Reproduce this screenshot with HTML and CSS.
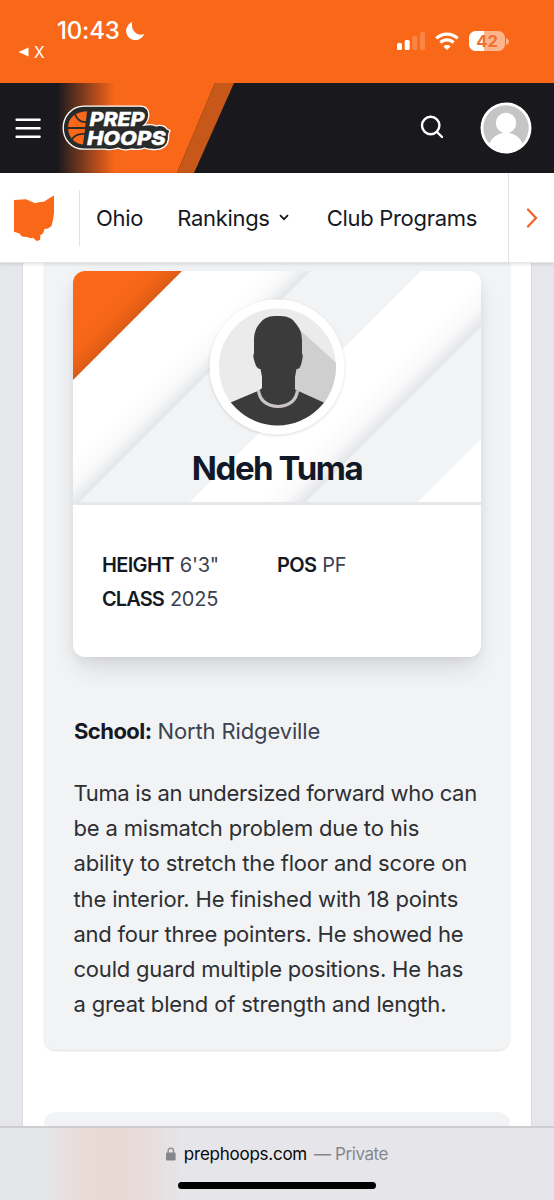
FILE: index.html
```
<!DOCTYPE html>
<html lang="en">
<head>
<meta charset="utf-8">
<title>Prep Hoops</title>
<link rel="stylesheet" href="styles.css">
</head>
<body>
<div class="screen">
  <header class="status">
    <div class="status-left">
      <div class="clock"><span>10:43</span>
        <svg width="20" height="20" viewBox="0 0 20 20"><path d="M7.2 1.1A9.3 9.3 0 1 0 19.2 13C13 15.500 5.500 10.500 7.200 1.100Z" fill="#fff"/></svg>
      </div>
      <div class="back"><svg width="11" height="10" viewBox="0 0 11 10"><path d="M0.5 5 10.5 .4V9.6Z" fill="#fff"/></svg><span>X</span></div>
    </div>
    <div class="status-right">
      <svg class="signal" width="28" height="18" viewBox="0 0 28 18" fill="#fff"><rect y="11" width="5" height="7" rx="1.5"/><rect x="7.7" y="8" width="5" height="10" rx="1.5"/><rect x="15.3" y="4" width="5" height="14" rx="1.5" opacity=".2"/><rect x="23" width="5" height="18" rx="1.5" opacity=".2"/></svg>
      <svg class="wifi" width="24" height="18" viewBox="0 0 24 18" fill="none" stroke="#fff" stroke-width="3.2"><path d="M1.3 6.4a15.4 15.4 0 0 1 21.4 0M5.4 10.6a9.5 9.5 0 0 1 13.2 0"/><path d="M12 17.9 8.4 14.4a5.2 5.2 0 0 1 7.2 0Z" fill="#fff" stroke="none"/></svg>
      <div class="battery"><span class="level">42</span><svg width="3" height="7" viewBox="0 0 3 7"><path d="M0 0q3 1.2 3 3.5T0 7Z" fill="#fff" opacity=".5"/></svg></div>
    </div>
  </header>

  <nav class="topbar">
    <svg class="flash" width="234" height="90" viewBox="0 0 234 90">
      <defs><linearGradient id="fade" gradientUnits="userSpaceOnUse" x1="57" y1="0" x2="115" y2="0"><stop offset="0" stop-color="#18181d"/><stop offset=".3" stop-color="#5b301f"/><stop offset=".7" stop-color="#b84e1b"/><stop offset="1" stop-color="#f96818"/></linearGradient></defs>
      <path d="M57 0H215L177 90H57Z" fill="url(#fade)"/><path d="M215 0h19l-40 90h-17Z" fill="#c85819"/>
    </svg>
    <svg class="menu" width="26" height="21" viewBox="0 0 26 21" stroke="#fff" stroke-width="2.4" stroke-linecap="round"><path d="M1.6 1.7h23M1.6 10.2h23M1.6 18.8h23"/></svg>
    <svg class="logo" width="110" height="46" viewBox="0 0 110 46">
      <path d="M22 1.2H78C84 1.2 87.5 5 86.7 11C86.2 15 84.5 18 82 20.2C88 19 91 19.5 94 21C98 19.5 103 20.5 105 24L108 25.5L106.5 30L106.5 34C105.5 42 99 45 91 44.5C87 44.5 84.5 44 82.5 43C80 44.5 73 44.8 69 44C64 45.5 60 45 56 43.2C50 45.5 46 44.5 43 44.2H22C9 44.2 1.2 34 1.2 23S9 1.2 22 1.2Z" fill="#292b2b" stroke="#fff" stroke-width="1.3"/>
      <path d="M25 6.2C13 6.7 6.3 13 6.1 22H23.2ZM6.1 24C7 33 12.5 38.5 21 39.5L23 24Z" fill="#f96818"/>
      <path d="M13 9C15 15.5 19 17.2 24 17.1M9.5 35.5C12 30 17 28.5 23 29" fill="none" stroke="#292b2b" stroke-width="1.7"/>
      <g fill="#fff" stroke="#fff" stroke-width=".4" class="logo-text"><text x="27.500" y="20.500" font-size="18.800" textLength="55" lengthAdjust="spacingAndGlyphs">PREP</text><text x="25" y="39.5" font-size="19" textLength="78.500" lengthAdjust="spacingAndGlyphs">HOOPS</text></g>
    </svg>
    <svg class="search" width="24" height="24" viewBox="0 0 24 24" fill="none" stroke="#fff" stroke-width="2.4" stroke-linecap="round"><circle cx="10.7" cy="10.5" r="8.7"/><path d="m17 17 5 5"/></svg>
    <svg class="user" width="52" height="52" viewBox="0 0 52 52"><circle cx="26" cy="26" r="25.5" fill="#fff"/><circle cx="26" cy="26" r="22.7" fill="#c5c5c5"/><circle cx="26" cy="21" r="10.2" fill="#fff"/><path d="M22.5 28h7v3c7 1.5 12 6 13.5 12.5Q37 50.7 26 50.8 15 50.7 9 43.5C10.500 37 15.500 32.500 22.500 31Z" fill="#fff"/></svg>
  </nav>

  <nav class="subnav">
    <div class="state"><svg width="42" height="47" viewBox="0 0 42 47"><path d="M1 5 9 4.500 13 4.200 17 6 22 8.200 27 7 31 6.800 35 4 41 .4V18L40 25 38.500 31 35 33.500 31.500 34 30 38.500 27.500 40 27 45 23.500 46 20 42.700 17.500 43.200 14 42 9 41.500 6.500 38.500 1 36.800Z" fill="#f96818"/></svg></div>
    <div class="links">
      <a class="ohio">Ohio</a>
      <a class="rankings"><span>Rankings</span><svg width="10" height="7" viewBox="0 0 10 7" fill="none" stroke="#151923" stroke-width="1.8"><path d="M1 1.100 5 5.200 9 1.100"/></svg></a>
      <a class="clubs">Club Programs</a>
    </div>
    <div class="next"><svg width="12" height="20" viewBox="0 0 12 20" fill="none" stroke="#f0642a" stroke-width="2.300" stroke-linecap="round"><path d="m2 1.500 8 8.500-8 8.500"/></svg></div>
  </nav>

  <main class="page">
    <div class="sheet">
      <section class="panel">
        <article class="player">
          <div class="hero">
            <svg class="stripes" width="408" height="231" viewBox="0 0 408 231">
              <defs>
                <linearGradient id="warm" gradientUnits="userSpaceOnUse" x1="34" y1="34" x2="55" y2="55"><stop offset="0" stop-color="#f96818"/><stop offset=".5" stop-color="#f16417"/><stop offset="1" stop-color="#dc5a15"/></linearGradient>
                <linearGradient id="s1" gradientUnits="userSpaceOnUse" x1="95" y1="95" x2="119" y2="119"><stop offset="0" stop-color="#fff"/><stop offset=".55" stop-color="#f9f9fa"/><stop offset="1" stop-color="#e3e5e7"/></linearGradient>
                <linearGradient id="s2" gradientUnits="userSpaceOnUse" x1="208" y1="208" x2="232" y2="232"><stop offset="0" stop-color="#fff"/><stop offset=".55" stop-color="#f9f9fa"/><stop offset="1" stop-color="#e3e5e7"/></linearGradient>
              </defs>
              <path d="M0 0H109L0 109Z" fill="url(#warm)"/>
              <path d="M182 0h56L0 238v-56Z" fill="url(#s1)"/>
              <path d="M238 0h110L117 231H7Z" fill="#f2f3f5"/>
              <path d="M408 0V56L233 231H177Z" fill="url(#s2)"/>
              <path d="M408 56v112l-63 63H233Z" fill="#f2f3f5"/>
            </svg>
            <svg class="portrait" width="136" height="136" viewBox="209 299 136 136">
              <clipPath id="round"><circle cx="277.500" cy="367" r="58.500"/></clipPath>
              <circle cx="277" cy="367" r="67.500" fill="#fff"/>
              <g clip-path="url(#round)"><path d="M209 299h136v136H209Z" fill="#ebebeb"/><path d="M300 330 345 371V412L290 392Z" fill="#cfcfcf"/>
              <path d="M261 322C265 317 270 316 277 316C286 316 291 317 294.500 322C300 328 302 333 302 341V353.500C303.300 355 302.500 359 301.500 363C300.300 368 299 369 296.500 369L295 377V389.500L327 404V436H227V404L259 390.500L262 388V377L260.500 369C258 369 256 367 255 363C253.700 359 252.500 355 254 353.500V341C254 333 256 327 261 322Z" fill="#3b3b3b"/>
              <path d="M258.500 390.500C259.500 400 267 406.500 278 406.500C289 406.500 296.500 400 297.500 390.500" fill="none" stroke="#cbc5c6" stroke-width="3.200"/></g>
            </svg>
            <h1>Ndeh Tuma</h1>
          </div>
          <dl class="facts">
            <div class="height"><dt>HEIGHT</dt><dd>6'3"</dd></div>
            <div class="pos"><dt>POS</dt><dd>PF</dd></div>
            <div class="class"><dt>CLASS</dt><dd>2025</dd></div>
          </dl>
        </article>
        <p class="school"><b>School:</b> <span>North Ridgeville</span></p>
        <p class="bio"><span class="l1">Tuma is an undersized forward who can</span><br><span class="l2">be a mismatch problem due to his</span><br><span class="l3">ability to stretch the floor and score on</span><br><span class="l4">the interior. He finished with 18 points</span><br><span class="l5">and four three pointers. He showed he</span><br><span class="l6">could guard multiple positions. He has</span><br><span class="l7">a great blend of strength and length.</span></p>
      </section>
      <section class="panel upcoming"></section>
    </div>
  </main>

  <footer class="browser">
    <div class="address"><svg width="10" height="14" viewBox="0 0 10 14"><rect y="5.500" width="9.600" height="8" rx="1.200" fill="#85868a"/><path d="M2.100 6V3.800a2.700 2.700 0 0 1 5.400 0V6" fill="none" stroke="#85868a" stroke-width="1.300"/></svg><span class="domain">prephoops.com</span><span class="private">— Private</span></div>
    <div class="home"></div>
  </footer>
</div>
</body>
</html>
```
FILE: styles.css
```
* { box-sizing: border-box; }
body { margin: 0; font-family: Inter, "Liberation Sans", sans-serif; color: #151923; }
svg { display: block; flex: none; }
.screen { width: 554px; height: 1200px; display: flex; flex-direction: column; overflow: hidden; background: #e5e7eb; }

.status { height: 83px; flex: none; background: #f96818; color: #fff; display: flex; justify-content: space-between; }
.status-left { padding: 16px 0 0 18px; }
.clock { display: flex; align-items: center; height: 29px; gap: 5px; padding-left: 39px; font-size: 24px; font-weight: 500; letter-spacing: -.2px; }
.back { display: flex; align-items: center; gap: 5px; height: 14px; font-size: 15.500px; }
.status-right { display: flex; align-items: flex-start; padding: 32px 45px 0 0; }
.wifi { margin-left: 10px; }
.battery { display: flex; align-items: center; gap: 1px; margin: -1px 0 0 10px; }
.level { width: 36px; height: 20px; border-radius: 6.500px; background: linear-gradient(90deg, #fff 43%, #fcb48b 43%); color: #ee7036; font-size: 16.500px; line-height: 20px; font-weight: 700; text-align: center; }

.topbar { height: 90px; flex: none; position: relative; display: flex; align-items: center; background: #18181d; padding: 0 22px 0 15px; }
.flash { position: absolute; left: 0; top: 0; }
.menu, .logo { position: relative; }
.logo { margin-left: 21px; }
.logo-text { font-family: Inter, sans-serif; font-weight: 800; font-style: italic; }
.search { margin: 0 0 2px auto; }
.user { margin-left: 36px; }

.subnav { height: 90px; flex: none; display: flex; position: relative; z-index: 1; align-items: center; background: #fff; border-bottom: 1px solid #e4e5e7; box-shadow: 0 1px 4px #0002; font-size: 22px; letter-spacing: -.3px; }
.state { width: 80px; height: 56px; border-right: 1px solid #dfe1e5; padding: 5px 0 0 13px; }
.links { flex: 1; display: flex; align-items: center; padding-left: 16px; }
.rankings { display: flex; align-items: center; gap: 9px; margin-left: 34px; }
.clubs { margin-left: 38px; }
.next { width: 46px; height: 90px; border-left: 1px solid #dfe1e5; padding: 35px 0 0 17px; }

.page { flex: 1; min-height: 0; overflow: hidden; padding: 0 23px; }
.sheet { background: #fff; height: 864px; padding: 0 21px; box-shadow: 0 0 2px #0002; }
.panel { background: #f2f3f5; border-radius: 0 0 12px 12px; box-shadow: 0 1px 2px #0002; height: 787px; padding: 8px 29px 0; }
.upcoming { border-radius: 12px 12px 0 0; height: 30px; margin-top: 62px; box-shadow: none; }
.player { height: 386px; background: #fff; border-radius: 12px; overflow: hidden; box-shadow: 0 14px 24px -3px #0000001c, 0 3px 8px #0000000d; }
.hero { position: relative; height: 234px; border-bottom: 3px solid #e5e7eb; display: flex; flex-direction: column; align-items: center; padding-top: 28px; }
.stripes { position: absolute; left: 0; top: 0; }
.portrait { position: relative; filter: drop-shadow(0 1px 1.500px #0002); }
h1 { position: relative; margin: 12px 0 0; font-size: 33px; line-height: 42px; font-weight: 700; letter-spacing: -1.450px; white-space: nowrap; color: #111827; }
.facts { display: grid; grid-template-columns: 175px 1fr; grid-auto-rows: 34px; margin: 0; padding: 43px 29px 0; font-size: 20px; line-height: 34px; }
.facts div { display: flex; gap: 6px; }
dt { font-weight: 600; letter-spacing: -.65px; }
dd { margin: 0; color: #3b4250; letter-spacing: -.25px; }
.class dt { letter-spacing: -.9px; }
.school { margin: 57px 0 0; padding-left: 1px; font-size: 22px; line-height: 35px; white-space: nowrap; letter-spacing: -.14px; }
.school b { letter-spacing: -.55px; }
.school span { color: #3b4250; }
.bio { margin: 27px 0 0; padding-left: .5px; font-size: 22px; line-height: 35.200px; color: #2d2f33; white-space: nowrap; }
.l1 { letter-spacing: -.33px; }
.l2 { letter-spacing: -.17px; }
.l3 { letter-spacing: -.2px; }
.l4 { letter-spacing: -.14px; }
.l5 { letter-spacing: -.25px; }
.l6 { letter-spacing: -.2px; }
.l7 { letter-spacing: -.17px; }

.browser { height: 74px; flex: none; border-top: 2px solid #ceced2; background: linear-gradient(90deg, #e4e6ea 45px, #e7dfe0 65px, #e9dad6 90px, #e9d9d4 120px, #e7dedd 155px, #e6e6ea 185px); display: flex; flex-direction: column; align-items: center; padding-top: 14px; }
.address { display: flex; align-items: center; gap: 8px; height: 24px; font-size: 17px; color: #08080a; white-space: nowrap; letter-spacing: -.25px; }
.private { color: #85868b; margin-left: -1px; letter-spacing: -.4px; }
.home { width: 198px; height: 7px; border-radius: 4px; background: #000; margin-top: 16px; }
```
